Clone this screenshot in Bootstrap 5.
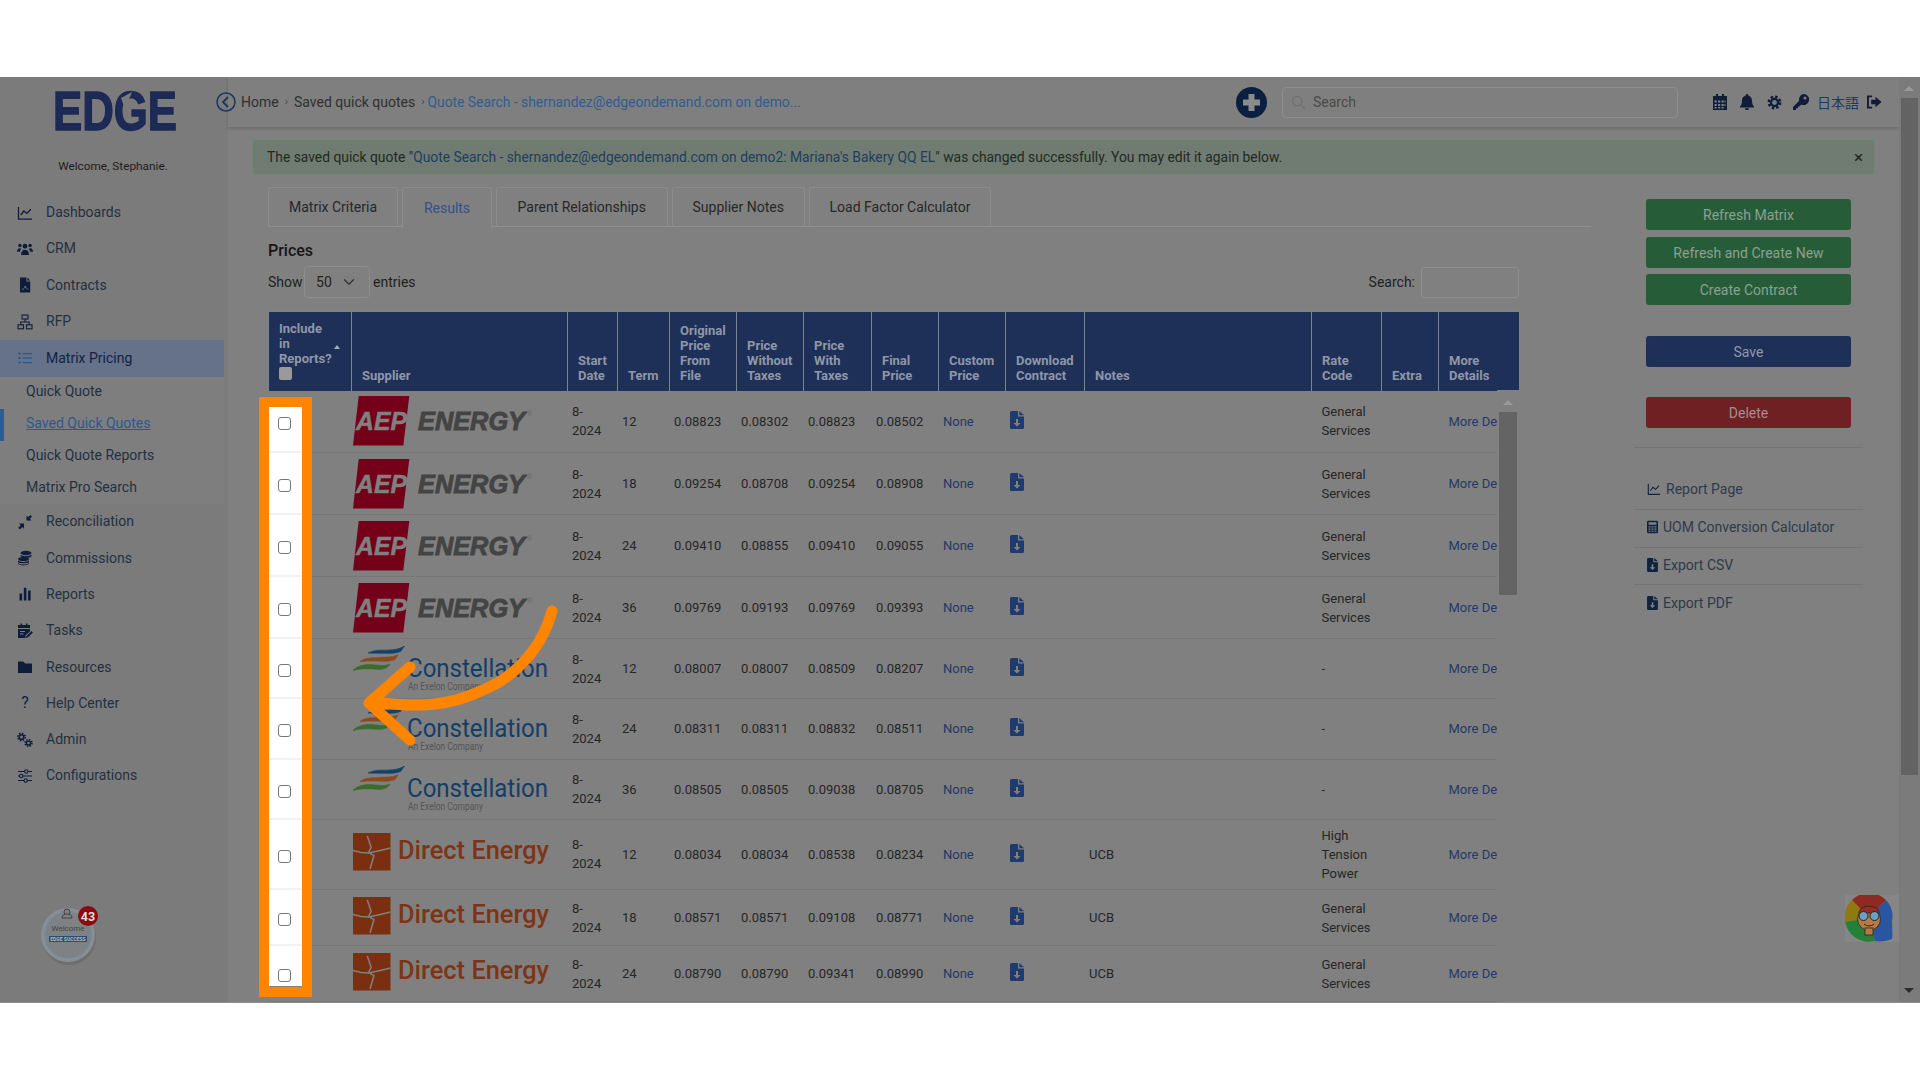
<!DOCTYPE html>
<html lang="en">
<head>
<meta charset="utf-8">
<title>Matrix Pricing</title>
<link href="https://cdn.jsdelivr.net/npm/bootstrap@5.3.0/dist/css/bootstrap.min.css" rel="stylesheet">
<style>
html,body{margin:0;background:#fff;overflow:hidden;height:1080px}
body{font-family:Roboto,"Liberation Sans",sans-serif;font-size:14px;color:#222}
.app-frame{margin-top:77px;height:926px;width:1920px;background:#808080;position:relative;overflow:hidden;border-bottom:1px solid #8d8d8d}
.side-rail{width:228px;flex:none;background:#7b7b7b;height:100%}
.brand-box{height:117.5px;padding-top:1.5px;text-align:center}
.brand-box svg{display:block;margin-left:52px}
.welcome-note{font-size:11.8px;color:#1d1d1d;margin-top:17px;line-height:16px;width:226px}
.rail-link{display:flex;align-items:center;gap:13px;height:36.3px;padding:0 0 0 17px;color:#24303f;font-size:14px;text-decoration:none;width:224px}
.rail-link svg{width:16px;height:16px;flex:none;color:#0f1d3c}
.rail-glyph{width:16px;flex:none;text-align:center;font-size:16px;color:#0f1d3c;line-height:18px}
.rail-link.is-open{background:#65728a;height:37px;color:#14223c}
.rail-link.is-open svg{color:#2a5586}
.sub-rail{background:#7e7e7e;width:224px;height:127px}
.sub-link{display:flex;align-items:center;height:32px;padding:0 0 2px 26px;color:#24303f;font-size:14px;text-decoration:none}
.sub-link.is-here{color:#2a5a90;text-decoration:underline;border-left:4px solid #256098;padding-left:22px}
.main-pane{width:1671px;flex:none}
.top-strip{height:50px;background:#7f7f7f;box-shadow:0 2px 3px rgba(0,0,0,.16);padding-right:17px}
.crumbs{font-size:14px;color:#303030;margin-left:-12px}
.crumbs svg{width:20px;height:20px;margin-right:5px}
.crumbs .sep{font-size:11px;margin:0 6px;color:#444}
.crumbs a{color:#2f5d92;text-decoration:none;font-size:13.85px}
.crumbs .sep2{margin-right:3px}
.plus-ico{width:31px;height:31px;margin-right:15px}
.quick-find{width:396px;height:31px;position:relative}
.quick-find .form-control{height:31px;background:transparent;border:1px solid #8d8d8d;border-radius:4px;padding:0 0 0 30px;font-size:14px;color:#444}
.quick-find .form-control::placeholder{color:#4a4a4a;opacity:1}
.quick-find svg{position:absolute;left:9px;top:8px;width:15px;height:15px;color:#707070}
.top-ico{display:block;color:#101d38;margin-left:13px}
.top-ico.ico-first{margin-left:35px}
.top-ico.ico-key{margin-left:11px}
.top-ico.ico-out{margin-left:8px}
.lang-pick{color:#20386e;font-family:"Noto Sans CJK JP",sans-serif;font-size:14px;white-space:nowrap;margin-left:8px}
.note-bar{margin:12px 24px 0;height:36px;background:#707c71;border:1px solid #6b8a74;border-radius:4px;padding:1px 11px 0 14px;color:#1f2a22;font-size:13.85px;display:flex;align-items:center;justify-content:space-between}
.note-bar a{color:#233c5f;text-decoration:none}
.note-x{font-size:17px;color:#222;line-height:1}
.work-row{padding-left:40px;margin-top:12px}
.work-col{width:1323px;flex:none}
.page-tabs{border-bottom:1px solid #8e8e8e;gap:4px;height:40px;flex-wrap:nowrap}
.page-tabs .nav-link,.page-tabs .nav-link.active{height:40px;margin:0;border:1px solid #8b8b8b;border-bottom:0;border-radius:3px 3px 0 0;color:#272727;font-size:14px;background:transparent;padding:0;display:flex;align-items:center;justify-content:center}
.page-tabs .nav-link.active{color:#2f5486;background:#808080;height:41px}
.tab-a{width:130px}.tab-b{width:90px}.tab-c{width:171.500px}.tab-d{width:133.500px}.tab-e{width:182px}
.prices-title{font-size:16px;font-weight:500;line-height:20px;margin:14px 0 5px;color:#151515}
.grid-tools{width:1251px;height:32px;color:#1f1f1f;font-size:14px}
.len-pick{width:66px;height:32px;padding:0 0 0 11px;background-color:transparent;border:1px solid #8d8d8d;border-radius:4px;font-size:14px;color:#222;margin:0 3px 0 1.500px}
.find-box{width:98px;height:31px;background:transparent;border:1px solid #8d8d8d;border-radius:3px;margin-left:6px}
.grid-shell{width:1251px;margin-top:13px;position:relative}
.price-grid{table-layout:fixed;width:1251px;margin:0;font-size:13px;--bs-table-bg:transparent;--bs-table-color:#2a2a2a;border-collapse:collapse}
.price-grid col:nth-child(1){width:83px}.price-grid col:nth-child(2){width:216px}.price-grid col:nth-child(3){width:50px}.price-grid col:nth-child(4){width:52px}
.price-grid col:nth-child(5),.price-grid col:nth-child(6),.price-grid col:nth-child(8),.price-grid col:nth-child(9){width:67px}
.price-grid col:nth-child(7){width:68px}.price-grid col:nth-child(10){width:79px}.price-grid col:nth-child(11){width:227px}.price-grid col:nth-child(12){width:70px}.price-grid col:nth-child(13){width:57px}.price-grid col:nth-child(14){width:81px}
.price-grid>thead>tr>th{background:#1e3058;color:#8e97a8;font-weight:700;font-size:13px;line-height:15px;vertical-align:bottom;padding:0 2px 8px 10px;border:1px solid #7d8290;border-width:1px 1px 0 0;height:79px}
.price-grid>thead>tr>th:first-child{border-left:1px solid #7d8290;position:relative;padding:0 18px 11px 10px}
.head-check{display:block;width:13px;height:13px;background:#9a9a9a;border-radius:2px;margin-top:1px}
.sort-mark{position:absolute;right:11px;top:33px;width:0;height:0;border:3px solid transparent;border-bottom:4px solid #a6adba;border-top:0}
.price-grid>tbody>tr>td{border:0;border-bottom:1px solid #777;padding:0 2px 0 4.5px;vertical-align:middle;line-height:19px;background:transparent;color:#262626;box-shadow:none;overflow:hidden}
.price-grid>tbody>tr>td.cell-wide{padding-left:10px}
.price-grid>tbody>tr>td.cell-logo{padding:0 0 0 1px}
.price-grid>tbody>tr>td.cell-pick{padding:4px 0 0 9.5px;position:relative;overflow:visible}
.cell-pick::before{content:"";position:absolute;left:0;top:0;bottom:-1px;width:34px;background:#fff;border-bottom:2px solid #f2f2f2}
tr:first-child>.cell-pick::before{top:16px}
tr:last-child>.cell-pick::before{bottom:15px;border-bottom:0}
.pick-box.form-check-input{position:relative;z-index:1;display:block;width:13px;height:13px;margin:0;border:1px solid #777;border-radius:3px;background-color:#fff}
.cell-logo svg{display:block}
.row-aep{height:62px}.row-con{height:60.3px}.row-tall{height:70px}.row-de1{height:56.6px}.row-de2{height:56px}
.price-grid a{color:#23396b;text-decoration:none;white-space:nowrap}
.doc-ico{display:block;width:14px;height:18px;color:#1e3a6e;margin-top:-3px}
.tbl-scroll{position:absolute;right:-4px;top:79px;bottom:0;width:26px;background:#808080}
.tbl-scroll i{position:absolute;left:2px;top:22px;width:18px;height:183px;background:#646464}
.tbl-scroll b{position:absolute;left:6px;top:10px;width:0;height:0;border:5px solid transparent;border-top:0;border-bottom:5px solid #999}
.side-tools{width:229px;margin-left:43px;padding-top:12px;flex:none}
.tool-btn{display:block;width:205px;height:31px;margin-left:12px;padding:0;border:0;border-radius:3px;font-size:14px;line-height:32px;text-align:center}
.tool-btn.t-go{background:#275c39;color:#8ba093}
.tool-btn.t-save{background:#1e3058;color:#8f98aa}
.tool-btn.t-del{background:#6e2022;color:#a88e8f}
.mt-a{margin-top:7px}.mt-b{margin-top:6px}.mt-c{margin-top:31px}.mt-d{margin-top:30px}
.tool-list{margin-top:19px;border-top:1px solid #747474}
.tool-list .list-group-item{background:transparent;border:0;border-bottom:1px solid #747474;border-radius:0;height:37.7px;padding:0 0 2px 13px;display:flex;align-items:center;gap:5px;color:#2f3a48;font-size:14px}
.tool-list .list-group-item.first-tool{height:62px;padding-top:23px}
.tool-list svg{width:11px;height:14px;color:#0f2340;flex:none}
.tool-list .first-tool svg{width:14px}
.page-scroll{width:21px;flex:none;background:#7b7b7b;position:relative}
.page-scroll i{position:absolute;left:2px;top:21px;width:17px;height:677px;background:#636363}
.page-scroll b{position:absolute;left:5px;top:9px;border:5px solid transparent;border-top:0;border-bottom:5px solid #999}
.page-scroll u{position:absolute;left:5px;bottom:9px;border:5px solid transparent;border-bottom:0;border-top:5px solid #2c2c2c}
.spot-frame{position:absolute;left:259px;top:320px;width:53px;height:600px;border:10px solid #ff8500;z-index:3;pointer-events:none}
.arrow-layer{position:absolute;left:0;top:-77px;width:1920px;height:1080px;z-index:4;pointer-events:none}
.tour-badge{position:absolute;left:39px;top:828px;width:62px;height:60px;z-index:2}
.chat-blob{position:absolute;left:1845px;top:818px;width:54px;height:47px;z-index:2;background:#868686}
</style>
</head>
<body>
<svg width="0" height="0" class="d-block position-absolute">
<defs>
<symbol id="i-chart" viewBox="0 0 16 16"><path d="M1.500 2v12.200h13.500M3.800 10l3-4 3 2.400 4-4.200" fill="none" stroke="currentColor" stroke-width="1.300"/></symbol>
<symbol id="i-users" viewBox="0 0 16 16"><g fill="currentColor"><circle cx="8" cy="5.200" r="2.400"/><circle cx="2.900" cy="4.500" r="1.700"/><circle cx="13.100" cy="4.500" r="1.700"/><path d="M4 14c0-3.400 1.600-5.200 4-5.200s4 1.800 4 5.200z"/><path d="M0 10.800c0-2.200 1-3.600 2.800-3.600.6 0 1.100.2 1.500.5C3.400 8.700 2.900 9.700 2.800 10.800z"/><path d="M16 10.800c0-2.200-1-3.600-2.800-3.600-.6 0-1.100.2-1.500.5.900 1 1.400 2 1.500 3.100z"/></g></symbol>
<symbol id="i-pdf" viewBox="0 0 16 16"><path d="M3 .6h6.400v4h3.800V15.400H3z" fill="currentColor"/><path d="M10.300.6l2.900 3h-2.900z" fill="currentColor"/><path d="M5 12.500c2-.2 3-2 3.300-3.600.3 1.800 1.500 3 3 3.400" fill="none" stroke="#7b7b7b" stroke-width=".9"/></symbol>
<symbol id="i-site" viewBox="0 0 16 16"><g fill="none" stroke="currentColor" stroke-width="1.100"><rect x="5" y="1" width="6" height="4"/><rect x="1" y="10.800" width="5.500" height="4"/><rect x="9.500" y="10.800" width="5.500" height="4"/><path d="M8 5v3M3.800 10.800V8h8.400v2.800"/></g></symbol>
<symbol id="i-list" viewBox="0 0 16 16"><g fill="currentColor"><rect x="1.500" y="2.500" width="2" height="2"/><rect x="1.500" y="7" width="2" height="2"/><rect x="1.500" y="11.500" width="2" height="2"/><rect x="5.500" y="3" width="9.500" height="1.100"/><rect x="5.500" y="7.500" width="9.500" height="1.100"/><rect x="5.500" y="12" width="9.500" height="1.100"/></g></symbol>
<symbol id="i-comp" viewBox="0 0 16 16"><g fill="currentColor"><path d="M9.500 1.500v5h5l-1.700-1.700L15 2.600 13.400 1l-2.200 2.200z"/><path d="M7 9.500H2l1.700 1.700L1.200 13.700 3 15.500l2.300-2.400L7 14.800z"/></g></symbol>
<symbol id="i-coin" viewBox="0 0 16 16"><g fill="currentColor"><ellipse cx="9" cy="3" rx="5.500" ry="2.200"/><path d="M3.500 5v1.200c1 1 3 1.500 5.500 1.500s4.500-.5 5.500-1.500V4.600C13.300 5.700 11.200 6.200 9 6.200S4.700 5.700 3.500 5z"/><ellipse cx="6.500" cy="9" rx="5.500" ry="2"/><path d="M1 10.300v1.600c1 1 3 1.400 5.500 1.400S11 12.900 12 11.900v-1.600c-1 1.100-3.100 1.700-5.500 1.700S2 11.400 1 10.300z"/><path d="M1 13v.8c1 1 3 1.600 5.500 1.600s4.500-.6 5.500-1.600V13c-1.100 1-3.100 1.500-5.500 1.500S2.100 14 1 13z"/></g></symbol>
<symbol id="i-bars" viewBox="0 0 16 16"><g fill="currentColor"><rect x="2.500" y="7.500" width="2.600" height="7"/><rect x="6.800" y="1.800" width="2.600" height="12.700"/><rect x="11" y="4.500" width="2.600" height="10"/></g></symbol>
<symbol id="i-task" viewBox="0 0 16 16"><g fill="currentColor"><rect x="3.500" y=".5" width="1.600" height="3"/><rect x="9" y=".5" width="1.600" height="3"/><path d="M1 2h12v3H1zM1 6h12v2.200L8.500 12.500v2.500H1zM3 8v1h5V8zM3 10.500v1h3.500v-1z" fill-rule="evenodd"/><path d="M9.500 13l5-5 1.400 1.400-5 5-2 .6z"/></g></symbol>
<symbol id="i-fold" viewBox="0 0 16 16"><path d="M1 2.500h5.200l2 2H15V14H1z" fill="currentColor"/></symbol>
<symbol id="i-gear" viewBox="0 0 16 16"><g fill="none" stroke="currentColor"><circle cx="8" cy="8" r="3.800" stroke-width="2.400"/><circle cx="8" cy="8" r="6" stroke-width="2.800" stroke-dasharray="2.600 2.110"/></g></symbol>
<symbol id="i-cogs" viewBox="0 0 16 16"><g fill="none" stroke="currentColor"><circle cx="4.500" cy="5" r="2.300" stroke-width="1.600"/><circle cx="4.500" cy="5" r="3.800" stroke-width="1.500" stroke-dasharray="1.500 1.480"/><circle cx="11.500" cy="11" r="2.100" stroke-width="1.500"/><circle cx="11.500" cy="11" r="3.500" stroke-width="1.500" stroke-dasharray="1.400 1.350"/></g></symbol>
<symbol id="i-slid" viewBox="0 0 16 16"><g fill="none" stroke="currentColor" stroke-width="1.100"><path d="M1 3.500h6.500M11 3.500h4M1 8h1.500M6 8h9M1 12.500h6M10.500 12.500H15"/><circle cx="9.200" cy="3.500" r="1.700"/><circle cx="4.200" cy="8" r="1.700"/><circle cx="8.700" cy="12.500" r="1.700"/></g></symbol>
<symbol id="i-cal" viewBox="0 0 14 16"><path fill="currentColor" fill-rule="evenodd" d="M3 0h2v2h4V0h2v2h3v14H0V2h3zM1.500 6.500v2h2.200v-2zM5 6.500v2h2.200v-2zM8.500 6.500v2h2.200v-2zM1.500 10v2h2.200v-2zM5 10v2h2.200v-2zM8.500 10v2h2.200v-2zM11.500 6.500v2h1v-2zM11.500 10v2h1v-2zM1.500 13v1.500h2.200V13zM5 13v1.500h2.200V13zM8.500 13v1.500h2.200V13z"/></symbol>
<symbol id="i-bell" viewBox="0 0 14 16"><path fill="currentColor" d="M7 0a1.200 1.200 0 0 1 1.200 1.400C10.600 2 12 4 12 6.400c0 3.600 1 5 2 6.100v1H0v-1c1-1.100 2-2.500 2-6.100C2 4 3.400 2 5.800 1.400A1.200 1.200 0 0 1 7 0zM5 14.300h4a2 2 0 0 1-4 0z"/></symbol>
<symbol id="i-key" viewBox="0 0 16 16"><path fill="currentColor" fill-rule="evenodd" d="M10.500 0A5.500 5.500 0 1 1 8.300 10.500L6.500 12.500H5v1.800H3V16H0v-3l6.200-6.200A5.500 5.500 0 0 1 10.500 0zM12 2.500a1.500 1.500 0 1 0 0 3 1.500 1.500 0 0 0 0-3z"/></symbol>
<symbol id="i-out" viewBox="0 0 16 14"><g fill="currentColor"><path d="M5.500 0v2H2v10h3.500v2H0V0z"/><path d="M9 1.500L15.500 7 9 12.500V9.300H4.500V4.700H9z"/></g></symbol>
<symbol id="i-down" viewBox="0 0 14 18"><path fill="currentColor" fill-rule="evenodd" d="M1.500 0H8v5.500h6v11a1.500 1.500 0 0 1-1.500 1.500h-11A1.500 1.500 0 0 1 0 16.500v-15A1.500 1.500 0 0 1 1.500 0zM6 8v4H3.500L7 15.500 10.500 12H8V8z"/><path fill="currentColor" d="M9.300 0L14 4.300H9.300z"/></symbol>
<symbol id="i-calc" viewBox="0 0 14 16"><path fill="currentColor" fill-rule="evenodd" d="M1.500 0h11A1.500 1.500 0 0 1 14 1.500v13a1.500 1.500 0 0 1-1.500 1.500h-11A1.500 1.500 0 0 1 0 14.500v-13A1.500 1.500 0 0 1 1.500 0zM2 2v3h10V2zM2 7v1.500h2.500V7zM5.800 7v1.500h2.500V7zM9.500 7v1.500H12V7zM2 10v1.500h2.500V10zM5.800 10v1.500h2.500V10zM9.500 10v1.500H12V10zM2 12.700V14h2.500v-1.300zM5.800 12.700V14h2.500v-1.300zM9.500 12.700V14H12v-1.300z"/></symbol>
<symbol id="g-aep" viewBox="0 0 57 50"><polygon points="5.700,0 56.300,0 50.300,49.500 0,49.500" fill="#730018"/></symbol>
<symbol id="g-con" viewBox="0 0 52 25"><g stroke-width=".7"><path d="M15 7C22 3.500 28 4.500 34 4.200 41 4 47 3 51.500 0L47.500 5.500C41 8 34 7.200 28 7.200 23 7.200 18.500 7.200 15 7z" fill="#12416b" stroke="#12416b"/><path d="M7 15.500C13 11 21 12 27 11.500 33 11 40 11.500 45 8.800L42 13.500C36 16 29 15 23 15 17 15 12 15 7 15.500z" fill="#8a4a1d" stroke="#8a4a1d"/><path d="M0 24.500C5 19 14 18.200 20 18.700 26 19.200 31 20.500 37 18L34 21.600C28 24.600 22 22.800 16 22.800 10 22.800 5 23 0 24.500z" fill="#3c6b2b" stroke="#3c6b2b"/></g></symbol>
<symbol id="g-de" viewBox="0 0 38 38"><rect width="37.500" height="37.500" fill="#7a3010"/><path d="M14.300 3L18.200 14.500 15.500 19.500 21 22.500 17 36M0 17.500L8 19.500 15.500 20 25 18 37.500 15" fill="none" stroke="#808080" stroke-width="1.500"/></symbol>
</defs>
</svg>

<div class="app-frame d-flex">
  <aside class="side-rail">
    <div class="brand-box">
      <svg width="130" height="62" viewBox="0 0 130 62"><text x="1" y="51" font-family="Liberation Sans" font-weight="700" font-size="55" textLength="124" lengthAdjust="spacingAndGlyphs" fill="#1c2a55" stroke="#1c2a55" stroke-width="1.500">EDGE</text><path d="M69 19L80 13 73 30z" fill="#7b7b7b"/></svg>
      <div class="welcome-note">Welcome, Stephanie.</div>
    </div>
    <nav class="nav flex-column">
      <a class="rail-link" href="#"><svg><use href="#i-chart"/></svg>Dashboards</a>
      <a class="rail-link" href="#"><svg><use href="#i-users"/></svg>CRM</a>
      <a class="rail-link" href="#"><svg><use href="#i-pdf"/></svg>Contracts</a>
      <a class="rail-link" href="#"><svg><use href="#i-site"/></svg>RFP</a>
      <a class="rail-link is-open" href="#"><svg><use href="#i-list"/></svg>Matrix Pricing</a>
      <div class="sub-rail">
        <a class="sub-link" href="#">Quick Quote</a>
        <a class="sub-link is-here" href="#">Saved Quick Quotes</a>
        <a class="sub-link" href="#">Quick Quote Reports</a>
        <a class="sub-link" href="#">Matrix Pro Search</a>
      </div>
      <a class="rail-link" href="#"><svg><use href="#i-comp"/></svg>Reconciliation</a>
      <a class="rail-link" href="#"><svg><use href="#i-coin"/></svg>Commissions</a>
      <a class="rail-link" href="#"><svg><use href="#i-bars"/></svg>Reports</a>
      <a class="rail-link" href="#"><svg><use href="#i-task"/></svg>Tasks</a>
      <a class="rail-link" href="#"><svg><use href="#i-fold"/></svg>Resources</a>
      <a class="rail-link" href="#"><span class="rail-glyph">?</span>Help Center</a>
      <a class="rail-link" href="#"><svg><use href="#i-cogs"/></svg>Admin</a>
      <a class="rail-link" href="#"><svg><use href="#i-slid"/></svg>Configurations</a>
    </nav>
  </aside>

  <main class="main-pane">
    <header class="top-strip d-flex align-items-center justify-content-between">
      <div class="crumbs d-flex align-items-center">
        <svg viewBox="0 0 20 20"><circle cx="10" cy="10" r="9" fill="none" stroke="#1b3560" stroke-width="1.500"/><path d="M12 5l-5 5 5 5" fill="none" stroke="#1b3560" stroke-width="1.800"/></svg>
        <span>Home</span><span class="sep">›</span><span>Saved quick quotes</span><span class="sep sep2">›</span><a href="#">Quote Search - shernandez@edgeondemand.com on demo...</a>
      </div>
      <div class="d-flex align-items-center">
        <svg class="plus-ico" viewBox="0 0 31 31"><circle cx="15.500" cy="15.500" r="15.500" fill="#0b1f3f"/><path d="M15.500 7v17M7 15.500h17" stroke="#8b8b8b" stroke-width="6"/></svg>
        <div class="quick-find"><svg viewBox="0 0 16 16"><circle cx="6.500" cy="6.500" r="5" fill="none" stroke="currentColor" stroke-width="1.300"/><path d="M10.500 10.500L15 15" stroke="currentColor" stroke-width="1.300"/></svg><input class="form-control" type="text" placeholder="Search"></div>
        <svg class="top-ico ico-first" width="14" height="16"><use href="#i-cal"/></svg>
        <svg class="top-ico" width="14" height="16"><use href="#i-bell"/></svg>
        <svg class="top-ico" width="15" height="15"><use href="#i-gear"/></svg>
        <svg class="top-ico ico-key" width="16" height="16"><use href="#i-key"/></svg>
        <span class="lang-pick">日本語</span>
        <svg class="top-ico ico-out" width="15" height="14"><use href="#i-out"/></svg>
      </div>
    </header>

    <div class="note-bar alert alert-success mb-0" role="alert">
      <span>The saved quick quote "<a href="#">Quote Search - shernandez@edgeondemand.com on demo2: Mariana's Bakery QQ EL</a>" was changed successfully. You may edit it again below.</span>
      <span class="note-x">×</span>
    </div>

    <div class="work-row d-flex">
      <section class="work-col">
        <ul class="nav nav-tabs page-tabs">
          <li class="nav-item"><a class="nav-link tab-a" href="#">Matrix Criteria</a></li>
          <li class="nav-item"><a class="nav-link tab-b active" href="#">Results</a></li>
          <li class="nav-item"><a class="nav-link tab-c" href="#">Parent Relationships</a></li>
          <li class="nav-item"><a class="nav-link tab-d" href="#">Supplier Notes</a></li>
          <li class="nav-item"><a class="nav-link tab-e" href="#">Load Factor Calculator</a></li>
        </ul>
        <h2 class="prices-title">Prices</h2>
        <div class="grid-tools d-flex align-items-center justify-content-between">
          <div class="d-flex align-items-center">Show <select class="form-select len-pick"><option>50</option></select> entries</div>
          <div class="d-flex align-items-center">Search: <input class="find-box form-control" type="text"></div>
        </div>
        <div class="grid-shell">
          <table class="table price-grid">
            <colgroup><col><col><col><col><col><col><col><col><col><col><col><col><col><col></colgroup>
            <thead><tr>
              <th>Include in Reports?<span class="sort-mark"></span><span class="head-check"></span></th>
              <th>Supplier</th><th>Start Date</th><th>Term</th><th>Original Price From File</th><th>Price Without Taxes</th><th>Price With Taxes</th><th>Final Price</th><th>Custom Price</th><th>Download Contract</th><th>Notes</th><th>Rate Code</th><th>Extra</th><th>More Details</th>
            </tr></thead>
            <tbody>
              <tr class="row-aep"><td class="cell-pick"><input class="pick-box form-check-input" type="checkbox"></td>
                <td class="cell-logo"><svg width="195" height="50" viewBox="0 0 195 50"><use href="#g-aep" width="57" height="50"/><text x="3" y="34.300" font-family="Liberation Sans" font-weight="700" font-style="italic" font-size="26.500" textLength="51" lengthAdjust="spacingAndGlyphs" fill="#808080" stroke="#808080" stroke-width=".5">AEP</text><text x="65" y="33.700" font-family="Liberation Sans" font-weight="700" font-style="italic" font-size="25.500" textLength="107" lengthAdjust="spacingAndGlyphs" fill="#444" stroke="#444" stroke-width=".9">ENERGY</text><text x="174" y="20" font-family="Liberation Sans" font-size="7" fill="#666">®</text></svg></td>
                <td>8-<br>2024</td><td>12</td><td>0.08823</td><td>0.08302</td><td>0.08823</td><td>0.08502</td><td><a href="#">None</a></td><td><svg class="doc-ico"><use href="#i-down"/></svg></td><td></td><td class="cell-wide">General<br>Services</td><td></td><td class="cell-wide"><a href="#">More Details</a></td></tr>
              <tr class="row-aep"><td class="cell-pick"><input class="pick-box form-check-input" type="checkbox"></td>
                <td class="cell-logo"><svg width="195" height="50" viewBox="0 0 195 50"><use href="#g-aep" width="57" height="50"/><text x="3" y="34.300" font-family="Liberation Sans" font-weight="700" font-style="italic" font-size="26.500" textLength="51" lengthAdjust="spacingAndGlyphs" fill="#808080" stroke="#808080" stroke-width=".5">AEP</text><text x="65" y="33.700" font-family="Liberation Sans" font-weight="700" font-style="italic" font-size="25.500" textLength="107" lengthAdjust="spacingAndGlyphs" fill="#444" stroke="#444" stroke-width=".9">ENERGY</text><text x="174" y="20" font-family="Liberation Sans" font-size="7" fill="#666">®</text></svg></td>
                <td>8-<br>2024</td><td>18</td><td>0.09254</td><td>0.08708</td><td>0.09254</td><td>0.08908</td><td><a href="#">None</a></td><td><svg class="doc-ico"><use href="#i-down"/></svg></td><td></td><td class="cell-wide">General<br>Services</td><td></td><td class="cell-wide"><a href="#">More Details</a></td></tr>
              <tr class="row-aep"><td class="cell-pick"><input class="pick-box form-check-input" type="checkbox"></td>
                <td class="cell-logo"><svg width="195" height="50" viewBox="0 0 195 50"><use href="#g-aep" width="57" height="50"/><text x="3" y="34.300" font-family="Liberation Sans" font-weight="700" font-style="italic" font-size="26.500" textLength="51" lengthAdjust="spacingAndGlyphs" fill="#808080" stroke="#808080" stroke-width=".5">AEP</text><text x="65" y="33.700" font-family="Liberation Sans" font-weight="700" font-style="italic" font-size="25.500" textLength="107" lengthAdjust="spacingAndGlyphs" fill="#444" stroke="#444" stroke-width=".9">ENERGY</text><text x="174" y="20" font-family="Liberation Sans" font-size="7" fill="#666">®</text></svg></td>
                <td>8-<br>2024</td><td>24</td><td>0.09410</td><td>0.08855</td><td>0.09410</td><td>0.09055</td><td><a href="#">None</a></td><td><svg class="doc-ico"><use href="#i-down"/></svg></td><td></td><td class="cell-wide">General<br>Services</td><td></td><td class="cell-wide"><a href="#">More Details</a></td></tr>
              <tr class="row-aep"><td class="cell-pick"><input class="pick-box form-check-input" type="checkbox"></td>
                <td class="cell-logo"><svg width="195" height="50" viewBox="0 0 195 50"><use href="#g-aep" width="57" height="50"/><text x="3" y="34.300" font-family="Liberation Sans" font-weight="700" font-style="italic" font-size="26.500" textLength="51" lengthAdjust="spacingAndGlyphs" fill="#808080" stroke="#808080" stroke-width=".5">AEP</text><text x="65" y="33.700" font-family="Liberation Sans" font-weight="700" font-style="italic" font-size="25.500" textLength="107" lengthAdjust="spacingAndGlyphs" fill="#444" stroke="#444" stroke-width=".9">ENERGY</text><text x="174" y="20" font-family="Liberation Sans" font-size="7" fill="#666">®</text></svg></td>
                <td>8-<br>2024</td><td>36</td><td>0.09769</td><td>0.09193</td><td>0.09769</td><td>0.09393</td><td><a href="#">None</a></td><td><svg class="doc-ico"><use href="#i-down"/></svg></td><td></td><td class="cell-wide">General<br>Services</td><td></td><td class="cell-wide"><a href="#">More Details</a></td></tr>
              <tr class="row-con"><td class="cell-pick"><input class="pick-box form-check-input" type="checkbox"></td>
                <td class="cell-logo"><svg width="197" height="46" viewBox="0 0 197 46"><use href="#g-con" width="52" height="25"/><text x="54" y="30.700" font-family="Roboto" font-size="25" textLength="141" lengthAdjust="spacingAndGlyphs" fill="#123e68">Constellation</text><text x="194" y="30.700" font-family="Roboto" font-size="8" fill="#666">.</text><text x="55" y="44" font-family="Roboto" font-size="10" textLength="75" lengthAdjust="spacingAndGlyphs" fill="#555">An Exelon Company</text></svg></td>
                <td>8-<br>2024</td><td>12</td><td>0.08007</td><td>0.08007</td><td>0.08509</td><td>0.08207</td><td><a href="#">None</a></td><td><svg class="doc-ico"><use href="#i-down"/></svg></td><td></td><td class="cell-wide">-</td><td></td><td class="cell-wide"><a href="#">More Details</a></td></tr>
              <tr class="row-con"><td class="cell-pick"><input class="pick-box form-check-input" type="checkbox"></td>
                <td class="cell-logo"><svg width="197" height="46" viewBox="0 0 197 46"><use href="#g-con" width="52" height="25"/><text x="54" y="30.700" font-family="Roboto" font-size="25" textLength="141" lengthAdjust="spacingAndGlyphs" fill="#123e68">Constellation</text><text x="194" y="30.700" font-family="Roboto" font-size="8" fill="#666">.</text><text x="55" y="44" font-family="Roboto" font-size="10" textLength="75" lengthAdjust="spacingAndGlyphs" fill="#555">An Exelon Company</text></svg></td>
                <td>8-<br>2024</td><td>24</td><td>0.08311</td><td>0.08311</td><td>0.08832</td><td>0.08511</td><td><a href="#">None</a></td><td><svg class="doc-ico"><use href="#i-down"/></svg></td><td></td><td class="cell-wide">-</td><td></td><td class="cell-wide"><a href="#">More Details</a></td></tr>
              <tr class="row-con"><td class="cell-pick"><input class="pick-box form-check-input" type="checkbox"></td>
                <td class="cell-logo"><svg width="197" height="46" viewBox="0 0 197 46"><use href="#g-con" width="52" height="25"/><text x="54" y="30.700" font-family="Roboto" font-size="25" textLength="141" lengthAdjust="spacingAndGlyphs" fill="#123e68">Constellation</text><text x="194" y="30.700" font-family="Roboto" font-size="8" fill="#666">.</text><text x="55" y="44" font-family="Roboto" font-size="10" textLength="75" lengthAdjust="spacingAndGlyphs" fill="#555">An Exelon Company</text></svg></td>
                <td>8-<br>2024</td><td>36</td><td>0.08505</td><td>0.08505</td><td>0.09038</td><td>0.08705</td><td><a href="#">None</a></td><td><svg class="doc-ico"><use href="#i-down"/></svg></td><td></td><td class="cell-wide">-</td><td></td><td class="cell-wide"><a href="#">More Details</a></td></tr>
              <tr class="row-tall"><td class="cell-pick"><input class="pick-box form-check-input" type="checkbox"></td>
                <td class="cell-logo"><svg width="197" height="42" viewBox="0 0 197 42"><use href="#g-de" width="38" height="38"/><text x="45" y="26" font-family="Roboto" font-weight="500" font-size="25" textLength="151" lengthAdjust="spacingAndGlyphs" fill="#7d3515">Direct Energy</text><text x="194" y="26" font-family="Roboto" font-size="8" fill="#8a6a5a">.</text></svg></td>
                <td>8-<br>2024</td><td>12</td><td>0.08034</td><td>0.08034</td><td>0.08538</td><td>0.08234</td><td><a href="#">None</a></td><td><svg class="doc-ico"><use href="#i-down"/></svg></td><td>UCB</td><td class="cell-wide">High<br>Tension<br>Power</td><td></td><td class="cell-wide"><a href="#">More Details</a></td></tr>
              <tr class="row-de1"><td class="cell-pick"><input class="pick-box form-check-input" type="checkbox"></td>
                <td class="cell-logo"><svg width="197" height="42" viewBox="0 0 197 42"><use href="#g-de" width="38" height="38"/><text x="45" y="26" font-family="Roboto" font-weight="500" font-size="25" textLength="151" lengthAdjust="spacingAndGlyphs" fill="#7d3515">Direct Energy</text><text x="194" y="26" font-family="Roboto" font-size="8" fill="#8a6a5a">.</text></svg></td>
                <td>8-<br>2024</td><td>18</td><td>0.08571</td><td>0.08571</td><td>0.09108</td><td>0.08771</td><td><a href="#">None</a></td><td><svg class="doc-ico"><use href="#i-down"/></svg></td><td>UCB</td><td class="cell-wide">General<br>Services</td><td></td><td class="cell-wide"><a href="#">More Details</a></td></tr>
              <tr class="row-de2"><td class="cell-pick"><input class="pick-box form-check-input" type="checkbox"></td>
                <td class="cell-logo"><svg width="197" height="42" viewBox="0 0 197 42"><use href="#g-de" width="38" height="38"/><text x="45" y="26" font-family="Roboto" font-weight="500" font-size="25" textLength="151" lengthAdjust="spacingAndGlyphs" fill="#7d3515">Direct Energy</text><text x="194" y="26" font-family="Roboto" font-size="8" fill="#8a6a5a">.</text></svg></td>
                <td>8-<br>2024</td><td>24</td><td>0.08790</td><td>0.08790</td><td>0.09341</td><td>0.08990</td><td><a href="#">None</a></td><td><svg class="doc-ico"><use href="#i-down"/></svg></td><td>UCB</td><td class="cell-wide">General<br>Services</td><td></td><td class="cell-wide"><a href="#">More Details</a></td></tr>
            </tbody>
          </table>
          <div class="tbl-scroll"><b></b><i></i></div>
        </div>
      </section>

      <aside class="side-tools">
        <button class="btn tool-btn t-go" type="button">Refresh Matrix</button>
        <button class="btn tool-btn t-go mt-a" type="button">Refresh and Create New</button>
        <button class="btn tool-btn t-go mt-b" type="button">Create Contract</button>
        <button class="btn tool-btn t-save mt-c" type="button">Save</button>
        <button class="btn tool-btn t-del mt-d" type="button">Delete</button>
        <div class="list-group list-group-flush tool-list">
          <div class="list-group-item first-tool"><svg><use href="#i-chart"/></svg>Report Page</div>
          <div class="list-group-item"><svg><use href="#i-calc"/></svg>UOM Conversion Calculator</div>
          <div class="list-group-item"><svg><use href="#i-down"/></svg>Export CSV</div>
          <div class="list-group-item"><svg><use href="#i-down"/></svg>Export PDF</div>
        </div>
      </aside>
    </div>
  </main>

  <div class="page-scroll"><b></b><i></i><u></u></div>

  <div class="spot-frame"></div>

  <svg class="arrow-layer" viewBox="0 0 1920 1080"><g fill="none" stroke="#ff8500" stroke-width="11" stroke-linecap="round" stroke-linejoin="round"><path d="M552 611C540 655 508 680 483 690 450 706 420 708 372 702"/><path d="M410 667L369 703 410 740"/></g></svg>

  <svg class="tour-badge" viewBox="0 0 62 60">
    <circle cx="30" cy="33" r="27" fill="#555" opacity=".35"/>
    <circle cx="29" cy="30" r="27" fill="#8a8e92"/>
    <circle cx="29" cy="30" r="23.500" fill="#7f8285" stroke="#6f8eaa" stroke-width="1.500" stroke-dasharray="7 4"/>
    <circle cx="28" cy="7" r="3" fill="#808080" stroke="#333" stroke-width=".8"/><path d="M23 13c0-3 2-4 5-4s5 1 5 4z" fill="#808080" stroke="#333" stroke-width=".8"/>
    <text x="29" y="26" text-anchor="middle" font-family="Roboto" font-size="8" fill="#444">Welcome</text>
    <rect x="10" y="31" width="38" height="6" fill="#2b4b7a"/>
    <text x="29" y="36" text-anchor="middle" font-family="Roboto" font-size="5" font-weight="700" fill="#bbb">EDGE SUCCESS</text>
    <circle cx="49" cy="11" r="10" fill="#8c0a0f"/>
    <text x="49" y="15.500" text-anchor="middle" font-family="Roboto" font-size="12.500" font-weight="700" fill="#ddd">43</text>
  </svg>

  <div class="chat-blob">
    <svg width="48" height="47" viewBox="0 0 48 47">
      <path d="M24 23L7 5A24 24 0 0 1 41 5z" fill="#8f2a22"/>
      <path d="M24 23L7 5A24 24 0 0 0 .2 27z" fill="#8f7a0f"/>
      <path d="M24 23L.2 27A24 24 0 0 0 30 46z" fill="#25803a"/>
      <path d="M24 23L41 5A24 24 0 0 1 47 26C47 34 48 40 47 44 42 46 36 47 30 46z" fill="#2a55a0"/>
      <circle cx="24" cy="24" r="11.500" fill="#b87a45" stroke="#332211" stroke-width=".8"/>
      <rect x="20" y="33" width="8" height="7" fill="#b87a45" stroke="#332211" stroke-width=".8"/>
      <path d="M14 18C14 9 34 9 34 18z" fill="#992a2a" stroke="#332211" stroke-width=".8"/>
      <circle cx="18.500" cy="21" r="4.500" fill="#6aa0c0" stroke="#222" stroke-width="1"/>
      <circle cx="29.500" cy="21" r="4.500" fill="#6aa0c0" stroke="#222" stroke-width="1"/>
      <path d="M19 29c3 2.500 7 2.500 10 0" fill="none" stroke="#332211" stroke-width="1"/>
    </svg>
  </div>
</div>
</body>
</html>
